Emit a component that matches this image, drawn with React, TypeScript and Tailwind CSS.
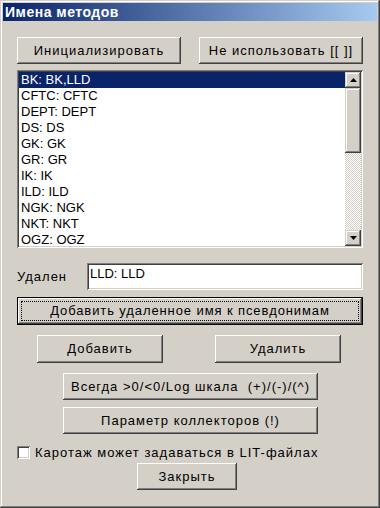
import React from "react";

const raised =
  "bg-[#d4d0c8] shadow-[inset_-1px_-1px_#404040,inset_1px_1px_#ffffff,inset_-2px_-2px_#808080]";
const raisedScroll =
  "bg-[#d4d0c8] shadow-[inset_-1px_-1px_#404040,inset_1px_1px_#d4d0c8,inset_-2px_-2px_#808080,inset_2px_2px_#ffffff]";
const sunken =
  "shadow-[inset_1px_1px_#808080,inset_-1px_-1px_#ffffff,inset_2px_2px_#404040,inset_-2px_-2px_#d4d0c8]";

function Btn({ w, h, label, extra = "" }: { w: string; h: string; label: string; extra?: string }) {
  return (
    <div className={`${w} ${h} ${raised} flex items-center justify-center text-[13px] tracking-[1px] text-black ${extra}`}>
      {label}
    </div>
  );
}

const items = [
  "BK: BK,LLD",
  "CFTC: CFTC",
  "DEPT: DEPT",
  "DS: DS",
  "GK: GK",
  "GR: GR",
  "IK: IK",
  "ILD: ILD",
  "NGK: NGK",
  "NKT: NKT",
  "OGZ: OGZ",
];

function Tri({ up }: { up: boolean }) {
  return (
    <svg width="7" height="4" viewBox="0 0 7 4" className="block">
      {up ? <polygon points="3.5,0 7,4 0,4" fill="#000" /> : <polygon points="0,0 7,0 3.5,4" fill="#000" />}
    </svg>
  );
}

export default function App() {
  return (
    <div
      className="w-[380px] h-[508px] bg-[#d4d0c8] p-[3px] shadow-[inset_-1px_-1px_#404040,inset_1px_1px_#d4d0c8,inset_-2px_-2px_#808080,inset_2px_2px_#ffffff] overflow-hidden"
      style={{ fontFamily: '"Liberation Sans", Arial, sans-serif' }}
    >
      <div className="h-[18px] bg-[linear-gradient(to_right,#0a246a,#a6caf0)] pl-[2px] text-white font-bold text-[14px] leading-[18px] tracking-[0.5px]">
        Имена методов
      </div>
      <div className="px-[14px] flex flex-col">
        <div className="mt-[16px] flex justify-between">
          <Btn w="w-[164px]" h="h-[27px]" label="Инициализировать" />
          <Btn w="w-[164px]" h="h-[27px]" label="Не использовать [[ ]]" />
        </div>

        <div className={`mt-[6px] h-[178px] bg-white ${sunken} p-[2px] flex`}>
          <div className="flex-1 overflow-hidden text-[13px] leading-[16px] text-black">
            {items.map((t, i) => (
              <div
                key={t}
                className={`h-[16px] pl-[2px] whitespace-nowrap ${i === 0 ? "bg-[#0a246a] text-white" : ""}`}
              >
                {t}
              </div>
            ))}
          </div>
          <div className="w-[16px] flex flex-col">
            <div className={`h-[16px] ${raisedScroll} flex items-center justify-center`}>
              <Tri up={true} />
            </div>
            <div className={`h-[65px] ${raisedScroll}`} />
            <div className="flex-1 bg-[conic-gradient(#ffffff_25%,#d4d0c8_0_50%,#ffffff_0_75%,#d4d0c8_0)] bg-[length:2px_2px]" />
            <div className={`h-[16px] ${raisedScroll} flex items-center justify-center`}>
              <Tri up={false} />
            </div>
          </div>
        </div>

        <div className="mt-[15px] h-[27px] flex items-center justify-between">
          <span className="text-[13px] tracking-[1px] text-black">Удален</span>
          <div className={`w-[276px] h-[27px] bg-white ${sunken} pt-[3px] pl-[3px] text-[13px] leading-[16px] text-black`}>
            LLD: LLD
          </div>
        </div>

        <div className="mt-[7px] h-[28px] border border-black">
          <div className={`h-full ${raised} p-[3px]`}>
            <div className="h-full border border-dotted border-black flex items-center justify-center text-[13px] tracking-[0.9px] text-black">
              Добавить удаленное имя к псевдонимам
            </div>
          </div>
        </div>

        <div className="mt-[10px] flex">
          <Btn w="w-[126px]" h="h-[28px]" label="Добавить" extra="ml-[20px]" />
          <Btn w="w-[126px]" h="h-[28px]" label="Удалить" extra="ml-[52px]" />
        </div>

        <Btn w="w-[255px]" h="h-[27px]" label="Всегда >0/<0/Log шкала  (+)/(-)/(^)" extra="mt-[10px] ml-[46px] whitespace-pre" />
        <Btn w="w-[255px]" h="h-[27px]" label="Параметр коллекторов (!)" extra="mt-[7px] ml-[46px]" />

        <div className="mt-[12px] h-[13px] flex items-center">
          <div className={`w-[13px] h-[13px] bg-white ${sunken}`} />
          <span className="ml-[5px] text-[13px] tracking-[1px] text-black leading-[13px]">
            Каротаж может задаваться в LIT-файлах
          </span>
        </div>

        <Btn w="w-[100px]" h="h-[27px]" label="Закрыть" extra="mt-[4px] ml-[120px]" />
      </div>
    </div>
  );
}
